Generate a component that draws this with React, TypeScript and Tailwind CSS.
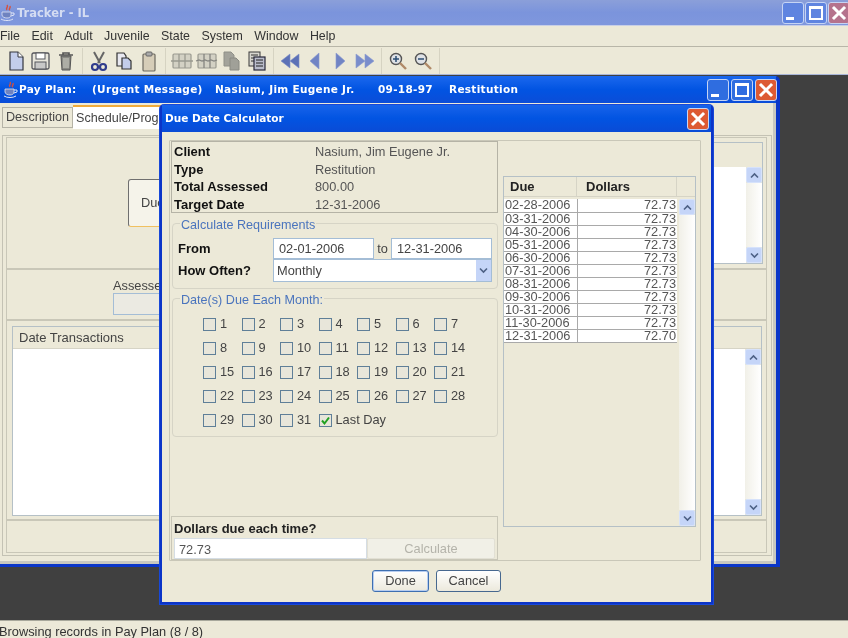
import React from "react";

const Ic = ({ children }: { children: React.ReactNode }) => (
  <svg width="24" height="22" viewBox="0 0 24 22" className="shrink-0">{children}</svg>
);

const Sep = () => <div className="w-px h-[26px] bg-[#d6d3c2] mx-[4px]" />;

function Toolbar() {
  return (
    <div className="h-[28px] flex items-center pl-[4px] bg-[#ece9d8] border-t border-[#b8b6a8]">
      <Ic><path d="M6 2h8l5 5v13H6z" fill="#c3cdeb" stroke="#34363f" strokeWidth="1.2" /><path d="M14 2v5h5" fill="#fff" stroke="#34363f" /></Ic>
      <div className="w-[1px]" />
      <Ic><rect x="3" y="3" width="17" height="16" rx="1.5" fill="#e8e6dc" stroke="#55565c" strokeWidth="1.3" /><rect x="7" y="3" width="9" height="6" fill="#fff" stroke="#55565c" /><rect x="6" y="12" width="11" height="7" fill="#c8c8c8" stroke="#55565c" /></Ic>
      <div className="w-[1px]" />
      <Ic><path d="M5 5h14M9 5V3h6v2" stroke="#555" strokeWidth="1.6" fill="none" /><path d="M7 6h10l-1 14H8z" fill="#8a8a84" stroke="#555" /><path d="M10 8v10M12 8v10M14 8v10" stroke="#d0d0c6" /></Ic>
      <Sep />
      <Ic><path d="M7 2l6 11M17 2L11 13" stroke="#666" strokeWidth="2" /><circle cx="8" cy="17" r="3" fill="none" stroke="#303c8c" strokeWidth="2.2" /><circle cx="16" cy="17" r="3" fill="none" stroke="#303c8c" strokeWidth="2.2" /></Ic>
      <div className="w-[1px]" />
      <Ic><path d="M5 3h7l2 3v10H5z" fill="#e8e8f0" stroke="#333" strokeWidth="1.2" /><path d="M10 8h6l3 3v8h-9z" fill="#c3cdeb" stroke="#333" strokeWidth="1.2" /></Ic>
      <div className="w-[1px]" />
      <Ic><rect x="6" y="4" width="12" height="17" rx="1" fill="#d6cdb8" stroke="#6d6a60" strokeWidth="1.2" /><rect x="9" y="2" width="6" height="4" rx="1" fill="#aaa" stroke="#666" /></Ic>
      <Sep />
      <Ic><rect x="3" y="4" width="18" height="14" rx="1" fill="#d3d1c4" stroke="#9a9a90" strokeWidth="1.2" /><path d="M1 11h22M9 4v14M15 4v14" stroke="#9a9a90" strokeWidth="1.3" /></Ic>
      <div className="w-[1px]" />
      <Ic><rect x="3" y="4" width="18" height="14" rx="1" fill="#d3d1c4" stroke="#9a9a90" strokeWidth="1.2" /><path d="M1 11l3-1 3 1 3-1 3 1 3-1 3 1 3-1M9 4v14M15 4v14" stroke="#858580" strokeWidth="1.3" fill="none" /></Ic>
      <div className="w-[1px]" />
      <Ic><path d="M4 2h7l3 3v11H4z" fill="#a3a39b" stroke="#909088" /><path d="M10 8h6l3 3v9h-9z" fill="#a0a098" stroke="#8a8a82" /></Ic>
      <div className="w-[1px]" />
      <Ic><rect x="4" y="2" width="11" height="14" fill="#d7d6cf" stroke="#3b3b3b" /><path d="M6 5h7M6 8h7M6 11h7" stroke="#333" /><rect x="9" y="7" width="11" height="13" fill="#b9bccb" stroke="#28283a" strokeWidth="1.2" /><path d="M11 10h7M11 13h7M11 16h7" stroke="#222" /></Ic>
      <Sep />
      <Ic><path d="M12 4v14L3 11zM21 4v14l-9-7z" fill="#5c71b6" stroke="#7e8fc8" strokeWidth=".6" /></Ic>
      <div className="w-[1px]" />
      <Ic><path d="M16 3v16L7 11z" fill="#7184c4" stroke="#8c9bd0" strokeWidth=".6" /></Ic>
      <div className="w-[1px]" />
      <Ic><path d="M8 3v16l9-8z" fill="#7184c4" stroke="#8c9bd0" strokeWidth=".6" /></Ic>
      <div className="w-[1px]" />
      <Ic><path d="M3 4v14l9-7zM12 4v14l9-7z" fill="#7a8dcb" stroke="#8c9bd0" strokeWidth=".6" /></Ic>
      <Sep />
      <Ic><circle cx="10" cy="9" r="5.5" fill="#dfe2e6" stroke="#555" strokeWidth="1.4" /><path d="M7 9h6M10 6v6" stroke="#2b4d73" strokeWidth="1.5" /><path d="M14 13l6 6" stroke="#b08a68" strokeWidth="2.4" /></Ic>
      <div className="w-[1px]" />
      <Ic><circle cx="10" cy="9" r="5.5" fill="#dfe2e6" stroke="#555" strokeWidth="1.4" /><path d="M7 9h6" stroke="#2b4d73" strokeWidth="1.5" /><path d="M14 13l6 6" stroke="#b08a68" strokeWidth="2.4" /></Ic>
      <Sep />
    </div>
  );
}

const JavaCup = () => (
  <svg width="16" height="18" viewBox="0 0 16 18" className="shrink-0">
    <path d="M7 1c2 2-2 3 0 5M10 2c1 2-2 3 0 4" stroke="#d8503a" strokeWidth="1.4" fill="none" />
    <path d="M2 8h9v3c0 2-2 3-4 3s-5-1-5-3z" fill="#6f83c0" stroke="#dfe4f5" strokeWidth=".8" />
    <path d="M11 9h3v2l-3 1M1 15c3 2 9 2 12 0" stroke="#dfe4f5" fill="none" />
  </svg>
);

function WinBtn({ kind, dim }: { kind: "min" | "max" | "close"; dim?: boolean }) {
  const bg =
    kind === "close"
      ? dim
        ? "bg-[#b5738d]"
        : "bg-[#dd5a33]"
      : dim
        ? "bg-[#5f84e0]"
        : "bg-[#2f6de0]";
  return (
    <div className={`w-[22px] h-[22px] rounded-[3px] border border-[#c6d4f4] flex items-center justify-center ${bg}`}>
      {kind === "min" && <div className="w-[8px] h-[3px] bg-white self-end mb-[3px] mr-[6px]" />}
      {kind === "max" && <div className="w-[14px] h-[14px] border-2 border-t-[3px] border-white" />}
      {kind === "close" && (
        <svg width="16" height="16" viewBox="0 0 16 16">
          <path d="M3 3l10 10M13 3L3 13" stroke="#fff" strokeWidth="3" strokeLinecap="square" />
        </svg>
      )}
    </div>
  );
}

const Check = ({ n, on }: { n: string; on?: boolean }) => (
  <div className="flex items-center gap-[4px] h-[14px]">
    <div className="w-[13px] h-[13px] bg-[#e8e6da] border border-[#5f7f98] flex items-center justify-center shrink-0">
      {on && (
        <svg width="11" height="11" viewBox="0 0 11 11">
          <path d="M2 5.5l2.5 3L9 2.5" stroke="#21a121" strokeWidth="2" fill="none" />
        </svg>
      )}
    </div>
    <span className="text-[12.8px] leading-none text-[#444]">{n}</span>
  </div>
);

const Arrow = ({ up }: { up?: boolean }) => (
  <div className="w-[16px] h-[16px] rounded-[2px] bg-[#c5d5f8] flex items-center justify-center shrink-0 border border-[#d6e2fb]">
    <svg width="9" height="7" viewBox="0 0 9 7">
      <path d={up ? "M1 5.5l3.5-3.5L8 5.5" : "M1 1.5L4.5 5 8 1.5"} stroke="#4d6185" strokeWidth="1.6" fill="none" />
    </svg>
  </div>
);

const Scroll = () => (
  <div className="w-[16px] shrink-0 flex flex-col">
    <Arrow up />
    <div className="flex-1 bg-gradient-to-r from-[#f1f0e8] to-white" />
    <Arrow />
  </div>
);

const Legend = ({ t }: { t: string }) => (
  <span className="absolute -top-[7px] left-[7px] px-px bg-[#ece9d8] text-[12.6px] leading-[16px] text-[#4a74bd] whitespace-nowrap">{t}</span>
);

const rows: [string, string][] = [
  ["02-28-2006", "72.73"],
  ["03-31-2006", "72.73"],
  ["04-30-2006", "72.73"],
  ["05-31-2006", "72.73"],
  ["06-30-2006", "72.73"],
  ["07-31-2006", "72.73"],
  ["08-31-2006", "72.73"],
  ["09-30-2006", "72.73"],
  ["10-31-2006", "72.73"],
  ["11-30-2006", "72.73"],
  ["12-31-2006", "72.70"],
];

const days = [
  ["1", "2", "3", "4", "5", "6", "7"],
  ["8", "9", "10", "11", "12", "13", "14"],
  ["15", "16", "17", "18", "19", "20", "21"],
  ["22", "23", "24", "25", "26", "27", "28"],
  ["29", "30", "31", "Last Day"],
];

function Dialog() {
  return (
    <div className="absolute left-[160px] top-[30px] w-[553px] h-[499px] flex flex-col rounded-t-[4px] border-[2px] border-t-0 border-[#0b34c8] bg-[#ece9d8] shadow-[0_0_0_1px_#1848d8]">
      <div className="h-[27px] shrink-0 flex items-center justify-between pl-[3px] pr-[2px] bg-gradient-to-b from-[#1763ea] via-[#0254e2] to-[#0a4bd6]">
        <span className="font-['DejaVu_Sans'] font-bold text-[10.5px] text-white">Due Date Calculator</span>
        <WinBtn kind="close" />
      </div>
      <div className="flex-1 flex flex-col pl-[7px] pr-[10px] pt-[8px]">
        <div className="h-[421px] flex border border-[#c9c7b8] rounded-[1px]">
          <div className="w-[328px] shrink-0 flex flex-col pl-[1px]">
            <div className="h-[72px] border border-[#b5b3a6] px-[2px] py-[1px] grid grid-cols-[141px_1fr] auto-rows-[17.5px] items-center text-[12.8px]">
              <b className="text-[#111] text-[13px]">Client</b><span className="text-[#555]">Nasium, Jim Eugene Jr.</span>
              <b className="text-[#111] text-[13px]">Type</b><span className="text-[#555]">Restitution</span>
              <b className="text-[#111] text-[13px]">Total Assessed</b><span className="text-[#555]">800.00</span>
              <b className="text-[#111] text-[13px]">Target Date</b><span className="text-[#555]">12-31-2006</span>
            </div>
            <div className="relative mt-[10px] ml-[1px] h-[66px] border border-[#d6d4c6] rounded-[4px] flex flex-col pl-[5px] pt-[14px]">
              <Legend t="Calculate Requirements" />
              <div className="flex items-center h-[21px]">
                <b className="w-[95px] text-[13px] text-[#111]">From</b>
                <div className="w-[101px] h-[21px] bg-white border border-[#a4bdd6] pl-[5px] text-[12.8px] leading-[19px] text-[#444]">02-01-2006</div>
                <span className="w-[17px] text-center text-[12.8px] text-[#444]">to</span>
                <div className="w-[101px] h-[21px] bg-white border border-[#a4bdd6] pl-[5px] text-[12.8px] leading-[19px] text-[#444]">12-31-2006</div>
              </div>
              <div className="flex items-center h-[23px]">
                <b className="w-[95px] text-[13px] text-[#111]">How Often?</b>
                <div className="w-[219px] h-[23px] bg-white border border-[#a4bdd6] pl-[3px] flex items-center justify-between">
                  <span className="text-[12.8px] text-[#444]">Monthly</span>
                  <div className="w-[15px] h-[21px] bg-[#c5d5f8] flex items-center justify-center">
                    <svg width="9" height="7" viewBox="0 0 9 7"><path d="M1 1.5L4.5 5 8 1.5" stroke="#4d6185" strokeWidth="1.6" fill="none" /></svg>
                  </div>
                </div>
              </div>
            </div>
            <div className="relative mt-[9px] ml-[1px] h-[139px] border border-[#d6d4c6] rounded-[4px] pl-[30px] pt-[18px]">
              <Legend t="Date(s) Due Each Month:" />
              <div className="flex flex-col gap-[10px]">
                {days.map((r, i) => (
                  <div key={i} className="flex">
                    {r.map((d) => (
                      <div key={d} className="w-[38.5px] shrink-0">
                        <div className="whitespace-nowrap"><Check n={d} on={d === "Last Day"} /></div>
                      </div>
                    ))}
                  </div>
                ))}
              </div>
            </div>
            <div className="flex-1" />
            <div className="h-[44px] border border-[#c9c7b8] px-[2px] flex flex-col pt-[2px]">
              <b className="text-[13px] leading-[19px] text-[#222]">Dollars due each time?</b>
              <div className="flex">
                <div className="w-[193px] h-[21px] bg-white border border-[#d5dde4] pl-[4px] text-[12.8px] leading-[21px] text-[#555]">72.73</div>
                <div className="flex-1 h-[21px] bg-[#f1f0e7] border border-[#e2e0d4] rounded-[2px] flex items-center justify-center text-[12.8px] text-[#b4b3aa]">Calculate</div>
              </div>
            </div>
          </div>
          <div className="flex-1 pl-[5px] pt-[35px] pb-[33px] pr-[4px]">
            <div className="h-full border border-[#b5c0c6] flex flex-col">
              <div className="h-[20px] shrink-0 flex items-center text-[13px] font-bold text-[#222] border-b border-[#d6d4c6]">
                <div className="w-[73px] pl-[6px] border-r border-[#d6d4c6]">Due</div>
                <div className="w-[100px] pl-[9px] border-r border-[#d6d4c6]">Dollars</div>
              </div>
              <div className="flex-1 flex min-h-0 pt-[2px]">
                <div className="flex-1 mr-[2px]">
                  <div className="border-b border-[#a9a9a9]">
                    {rows.map(([d, v]) => (
                      <div key={d} className="h-[13px] flex text-[12.8px] leading-[12px] text-[#555] border-t border-[#a9a9a9] first:border-t-0">
                        <div className="w-[74px] shrink-0 pl-px bg-white border-r border-[#a9a9a9]">{d}</div>
                        <div className="flex-1 text-right pr-px bg-white">{v}</div>
                      </div>
                    ))}
                  </div>
                </div>
                <Scroll />
              </div>
            </div>
          </div>
        </div>
        <div className="flex gap-[7px] pt-[9px] pl-[203px] text-[12.8px] text-[#444]">
          <div className="w-[57px] h-[22px] flex items-center justify-center rounded-[3px] bg-gradient-to-b from-white to-[#ece9dc] border border-[#3e6fb1] shadow-[inset_0_0_0_1px_#b7cdf0]">Done</div>
          <div className="w-[65px] h-[22px] flex items-center justify-center rounded-[3px] bg-gradient-to-b from-white to-[#ece9dc] border border-[#47688f]">Cancel</div>
        </div>
      </div>
    </div>
  );
}

function PayPlan() {
  return (
    <div className="absolute -left-[4px] top-[1px] w-[784px] h-[491px] flex flex-col rounded-t-[5px] border-[3px] border-r-[4px] border-t-0 border-[#0a36c8] bg-[#ece9d8] shadow-[inset_-3px_-3px_0_#c8c8c0]">
      <div className="h-[27px] shrink-0 flex items-center pl-[4px] bg-gradient-to-b from-[#1a68ee] via-[#0254e2] to-[#0b4dd8]">
        <JavaCup />
        <div className="flex font-['DejaVu_Sans'] font-bold text-[10.5px] tracking-[.3px] text-white whitespace-nowrap">
          <span className="w-[73px]">Pay Plan:</span>
          <span className="w-[123px]">(Urgent Message)</span>
          <span className="w-[163px]">Nasium, Jim Eugene Jr.</span>
          <span className="w-[71px]">09-18-97</span>
          <span>Restitution</span>
        </div>
        <div className="flex-1" />
        <div className="flex gap-[2px] -mr-[1px]">
          <WinBtn kind="min" />
          <WinBtn kind="max" />
          <WinBtn kind="close" />
        </div>
      </div>
      <div className="flex h-[26px] shrink-0 pl-[3px] pt-[2px] text-[12.6px]">
        <div className="h-[21px] mt-[2px] px-[3px] flex items-center bg-[#ece9d8] border border-[#b5b3a6] text-[#444]">Description</div>
        <div className="h-[24px] w-[110px] pl-[3px] pt-[2px] flex items-start bg-white border-t-[2px] border-[#f0ab3c] text-[#444] whitespace-nowrap">Schedule/Program</div>
      </div>
      <div className="flex-1 border border-[#c4c2b4] ml-[3px] mr-[4px] mt-[6px] mb-[8px] flex flex-col pl-[3px] pr-[4px] pt-[1px] pb-[2px]">
        <div className="h-[132px] shrink-0 flex border border-[#c9c7b8]">
          <div className="w-[121px] flex items-center">
            <div className="w-[90px] h-[48px] ml-[121px] shrink-0 rounded-[3px] border border-[#6f6f6f] border-b-[#f0c060] bg-[#f5f3ea] flex items-center pl-[12px] text-[12.8px] text-[#444]">Due</div>
          </div>
          <div className="flex-1" />
          <div className="w-[54px] my-[4px] mr-[3px] flex flex-col border border-[#b5c0c6]">
            <div className="h-[24px]" />
            <div className="flex-1 flex">
              <div className="flex-1 bg-white" />
              <Scroll />
            </div>
          </div>
        </div>
        <div className="h-[51px] shrink-0 border border-[#c9c7b8] pl-[106px] pt-[8px] text-[12.8px] leading-[15px] text-[#444]">
          <div>Assessed</div>
          <div className="w-[60px] h-[22px] bg-[#ebeae2] border border-[#a4bdd6]" />
        </div>
        <div className="h-[200px] shrink-0 border border-[#c9c7b8] pl-[5px] pr-[4px] py-[5px] flex flex-col">
          <div className="h-[190px] flex flex-col border border-[#b5c0c6] shrink-0">
            <div className="h-[22px] shrink-0 pl-[6px] flex items-center text-[13px] text-[#444] border-b border-[#d6d4c6]">Date Transactions</div>
            <div className="flex-1 flex min-h-0">
              <div className="flex-1 bg-white" />
              <Scroll />
            </div>
          </div>
        </div>
        <div className="flex-1 border border-[#c9c7b8]" />
      </div>
    </div>
  );
}

export default function App() {
  return (
    <div className="w-[848px] h-[638px] flex flex-col overflow-hidden bg-[#404040] font-['Liberation_Sans',sans-serif] blur-[0.5px]">
      <div className="h-[25px] shrink-0 flex items-center bg-gradient-to-b from-[#8b9fd9] via-[#7b94dc] to-[#7f97dd]">
        <JavaCup />
        <span className="ml-[1px] pt-[2px] font-['DejaVu_Sans'] font-bold text-[11.5px] text-[#d4dcf2]">Tracker - IL</span>
        <div className="flex-1" />
        <div className="flex gap-[1px] -mr-[2px]">
          <WinBtn kind="min" dim />
          <WinBtn kind="max" dim />
          <WinBtn kind="close" dim />
        </div>
      </div>
      <div className="h-[21px] shrink-0 flex items-center gap-[11.5px] bg-[#ece9d8] text-[12.4px] text-[#333] border-t border-[#c8cfe6]">
        {["File", "Edit", "Adult", "Juvenile", "State", "System", "Window", "Help"].map((m) => (
          <span key={m}>{m}</span>
        ))}
      </div>
      <Toolbar />
      <div className="relative flex-1 bg-[#404040] border-t border-[#a9b6d8]">
        <PayPlan />
        <Dialog />
      </div>
      <div className="h-[18px] shrink-0 bg-[#ece9d8] border-t border-[#a8a89c] text-[12.8px] leading-[22px] text-[#333] -ml-px whitespace-nowrap overflow-hidden">Browsing records in Pay Plan (8 / 8)</div>
    </div>
  );
}
